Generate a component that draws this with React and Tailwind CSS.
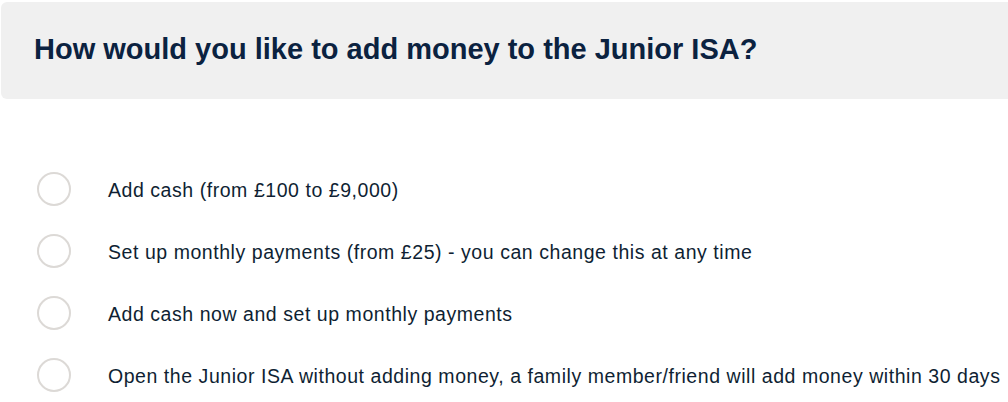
import React, { useState } from 'react';

const options = [
    'Add cash (from £100 to £9,000)',
    'Set up monthly payments (from £25) - you can change this at any time',
    'Add cash now and set up monthly payments',
    'Open the Junior ISA without adding money, a family member/friend will add money within 30 days',
];

const App = () => {
    const [selected, setSelected] = useState(null);

    return (
        <div className="w-full h-[402px] overflow-hidden bg-white" style={{ fontFamily: '"Liberation Sans", Arial, sans-serif' }}>
            {/* Question header */}
            <div className="mt-[2px] ml-[1px] w-[1030px] h-[97px] bg-[#f0f0f0] rounded-[6px] flex items-center pl-[33px]">
                <h2 className="text-[29px] font-bold text-[#0b2240] leading-none pb-[2px]">
                    How would you like to add money to the Junior ISA?
                </h2>
            </div>

            {/* Options */}
            <div className="mt-[59px] flex flex-col">
                {options.map((label, index) => (
                    <label
                        key={index}
                        className="h-[62px] flex items-center cursor-pointer"
                        onClick={() => setSelected(index)}
                    >
                        <span className="ml-[37px] w-[34px] h-[34px] rounded-full border-2 border-[#dcd9d6] bg-white flex items-center justify-center shrink-0">
                            {selected === index && <span className="w-[16px] h-[16px] rounded-full bg-[#0b2240]" />}
                        </span>
                        <span className="ml-[37px] pt-[3px] text-[19.5px] tracking-[0.55px] text-[#0f1f33] whitespace-nowrap">{label}</span>
                    </label>
                ))}
            </div>
        </div>
    );
};

export default App;
